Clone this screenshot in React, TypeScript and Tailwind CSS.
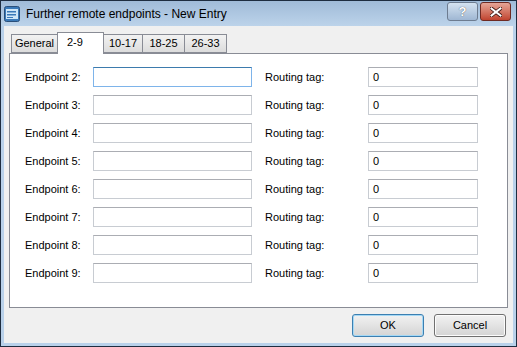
import React from "react";

const rows = [2, 3, 4, 5, 6, 7, 8, 9];
const tabs = [
  { label: "General", w: "w-[47px]" },
  { label: "2-9", w: "w-[47px]" },
  { label: "10-17", w: "w-[40px]" },
  { label: "18-25", w: "w-[43px]" },
  { label: "26-33", w: "w-[43px]" },
];

const WindowIcon: React.FC = () => (
  <svg width="16" height="16" viewBox="0 0 16 16">
    <rect x="0.5" y="0.5" width="15" height="15" rx="2" fill="#3a79b8" stroke="#2a4f7a" />
    <rect x="2" y="3" width="12" height="10" fill="#cfe6f7" />
    <rect x="3" y="5" width="9" height="1.5" fill="#3a79b8" />
    <rect x="3" y="8" width="9" height="1.5" fill="#3a79b8" />
    <rect x="3" y="11" width="6" height="1" fill="#3a79b8" />
  </svg>
);

const Field: React.FC<{ value?: string; focused?: boolean; width: string }> = ({
  value = "",
  focused = false,
  width,
}) => (
  <div
    className={`h-[20px] ${width} border bg-white px-[4px] text-[11px] leading-[18px] text-[#000000] ${
      focused ? "border-[#7eb4ea] border-t-[#3d7bad]" : "border-[#c8ccd2] border-t-[#abadb3]"
    }`}
  >
    {value}
  </div>
);

export default function App() {
  return (
    <div
      className="flex h-[347px] w-[517px] flex-col border border-[#1e2d40] bg-[#b9d1ea]"
      style={{ fontFamily: '"Liberation Sans", Arial, sans-serif' }}
    >
      {/* title bar */}
      <div className="flex h-[25px] items-center bg-gradient-to-b from-[#a0bbd8] to-[#bcd3ea] pl-[3px] pr-[5px]">
        <WindowIcon />
        <span className="ml-[6px] text-[12px] text-black">Further remote endpoints - New Entry</span>
        <div className="ml-auto flex gap-[2px] self-start pt-[1px]">
          <div className="flex h-[19px] w-[31px] items-center justify-center rounded-[3px] border border-[#6d7c90] bg-gradient-to-b from-[#d5e3f1] to-[#9fb7d3] text-[13px] font-bold text-white [text-shadow:0_0_1px_#333]">
            ?
          </div>
          <div className="flex h-[19px] w-[31px] items-center justify-center rounded-[3px] border border-[#6e2a22] bg-gradient-to-b from-[#e4a597] to-[#c0432f]">
            <svg width="12" height="10" viewBox="0 0 12 10">
              <path d="M1.5 1.5 L10.5 8.5 M10.5 1.5 L1.5 8.5" stroke="#3a1510" strokeWidth="3.6" strokeLinecap="square" />
              <path d="M1.5 1.5 L10.5 8.5 M10.5 1.5 L1.5 8.5" stroke="#ffffff" strokeWidth="2" strokeLinecap="square" />
            </svg>
          </div>
        </div>
      </div>

      {/* client area */}
      <div className="mx-[3px] mb-[3px] flex flex-1 flex-col bg-[#f0f0f0] px-[5px] pt-[6px]">
        {/* tabs */}
        <div className="flex h-[21px] items-end pl-[2px]">
          {tabs.map((t) =>
            t.label === "2-9" ? (
              <div
                key={t.label}
                className={`relative z-10 -mb-px -ml-px flex h-[22px] ${t.w} items-start border border-b-0 border-[#898c95] bg-white pl-[9px] pt-[1px] text-[11px] text-black`}
              >
                {t.label}
              </div>
            ) : (
              <div
                key={t.label}
                className={`-ml-px flex h-[19px] ${t.w} items-center justify-center border border-[#898c95] bg-gradient-to-b from-[#f2f2f2] to-[#dcdcdc] text-[11px] text-black first:ml-0`}
              >
                {t.label}
              </div>
            )
          )}
        </div>

        {/* panel */}
        <div className="flex h-[255px] flex-col gap-[8px] border border-[#898c95] bg-white pl-[15px] pt-[13px]">
          {rows.map((n, i) => (
            <div key={n} className="flex h-[20px] items-center text-[11px] text-black">
              <span className="w-[68px]">Endpoint {n}:</span>
              <Field focused={i === 0} width="w-[159px]" />
              <span className="ml-[13px] w-[103px]">Routing tag:</span>
              <Field value="0" width="w-[110px]" />
            </div>
          ))}
        </div>

        {/* buttons */}
        <div className="flex justify-end gap-[10px] pr-[2px] pt-[6px]">
          <div className="flex h-[23px] w-[72px] items-center justify-center rounded-[3px] border border-[#3c7fb1] bg-gradient-to-b from-[#f2f2f2] to-[#d4d4d4] text-[11px] text-black shadow-[inset_0_0_0_1px_#a4d8f5]">
            OK
          </div>
          <div className="flex h-[23px] w-[72px] items-center justify-center rounded-[3px] border border-[#707070] bg-gradient-to-b from-[#f2f2f2] to-[#d4d4d4] text-[11px] text-black shadow-[inset_0_0_0_1px_#fcfcfc]">
            Cancel
          </div>
        </div>
      </div>
    </div>
  );
}
